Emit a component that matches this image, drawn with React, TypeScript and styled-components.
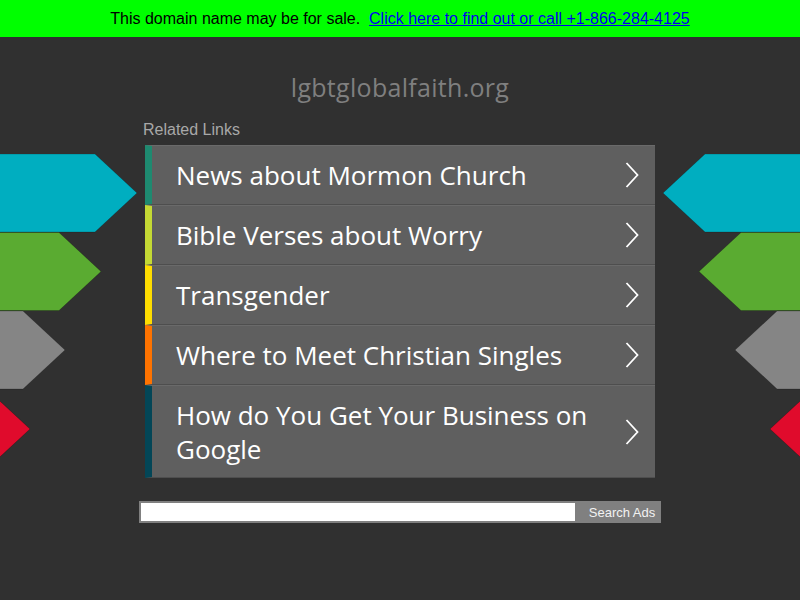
import React from "react";
import styled, { createGlobalStyle } from "styled-components";

const Global = createGlobalStyle`
  html, body { margin: 0; padding: 0; background: #303030; }
  body { font-family: "Liberation Sans", Arial, sans-serif; }
`;

const Page = styled.div`
  position: relative;
  width: 800px;
  height: 600px;
  overflow: hidden;
  background: #303030;
`;

const Banner = styled.div`
  height: 37px;
  background: #00ff00;
  display: flex;
  align-items: center;
  justify-content: center;
  font: 16px "Liberation Sans", Arial, sans-serif;
  color: #000;
  white-space: pre;
`;

const BannerLink = styled.a`
  color: #0000ee;
  text-decoration: underline;
`;

const Title = styled.h1`
  margin: 33px 0 0;
  text-align: center;
  font: 400 25px/34px "Open Sans", sans-serif;
  color: #7f7f7f;
  letter-spacing: 0.3px;
`;

const Content = styled.div`
  position: relative;
  z-index: 1;
  width: 510px;
  margin: 0 auto;
`;

const RelatedLabel = styled.div`
  margin: 16px 0 0 -2px;
  font: 16px/20px "Liberation Sans", Arial, sans-serif;
  color: #a8a8a8;
`;

const List = styled.div`
  margin-top: 5px;
  display: flex;
  flex-direction: column;
`;

const Row = styled.a<{ $accent: string; $tall?: boolean }>`
  display: flex;
  align-items: center;
  box-sizing: border-box;
  height: ${(p) => (p.$tall ? "93px" : "60px")};
  background: #5f5f5f;
  border-left: 7px solid ${(p) => p.$accent};
  border-top: 1px solid #6a6a6a;
  border-bottom: 1px solid #4e4e4e;
  padding: 0 16px 0 24px;
  text-decoration: none;
  color: #ffffff;
`;

const RowText = styled.span`
  flex: 1;
  font: 400 26px/34px "Open Sans", sans-serif;
  color: #fff;
`;

const Chevron = styled.svg`
  flex: none;
  width: 14px;
  height: 26px;
`;

const SearchBar = styled.form`
  display: flex;
  width: 522px;
  height: 22px;
  margin: 23px 0 0 -6px;
  box-sizing: border-box;
  background: #808080;
  padding: 2px 0 2px 2px;
`;

const SearchInput = styled.input`
  flex: 1;
  border: none;
  outline: none;
  background: #fff;
  padding: 0;
  margin: 0;
  height: 18px;
`;

const SearchButton = styled.button`
  flex: none;
  width: 86px;
  border: none;
  background: #808080;
  color: #f2f2f2;
  font: 13px "Liberation Sans", Arial, sans-serif;
  padding: 0 0 0 8px;
  margin: -2px 0;
  text-align: center;
`;

const Decor = styled.svg<{ $side: "left" | "right" }>`
  position: absolute;
  top: 154px;
  ${(p) => (p.$side === "left" ? "left: 0;" : "right: 0;")}
  width: 140px;
  height: 320px;
  ${(p) => (p.$side === "right" ? "transform: scaleX(-1);" : "")}
`;

const arrows = [
  { color: "#00aec0", body: 95, top: 0 },
  { color: "#5aab31", body: 59, top: 78.5 },
  { color: "#858585", body: 23, top: 157 },
  { color: "#e00b2c", body: -12, top: 236 },
];

function Arrows({ side }: { side: "left" | "right" }) {
  return (
    <Decor $side={side} viewBox="0 0 140 320">
      {arrows.map((a, i) => (
        <polygon
          key={i}
          points={`-20,${a.top} ${a.body},${a.top} ${a.body + 42},${a.top + 39} ${a.body},${a.top + 78} -20,${a.top + 78}`}
          fill={a.color}
          stroke="rgba(0,0,0,0.25)"
          strokeWidth="0.8"
        />
      ))}
    </Decor>
  );
}

const links = [
  { text: "News about Mormon Church", color: "#1e8a70" },
  { text: "Bible Verses about Worry", color: "#c4d934" },
  { text: "Transgender", color: "#ffdd00" },
  { text: "Where to Meet Christian Singles", color: "#ff7300" },
  { text: "How do You Get Your Business on Google", color: "#034657", tall: true },
];

export default function App() {
  return (
    <Page>
      <Global />
      <Banner>
        {"This domain name may be for sale.  "}
        <BannerLink href="#">Click here to find out or call +1-866-284-4125</BannerLink>
      </Banner>
      <Arrows side="left" />
      <Arrows side="right" />
      <Title>lgbtglobalfaith.org</Title>
      <Content>
        <RelatedLabel>Related Links</RelatedLabel>
        <List>
          {links.map((l) => (
            <Row key={l.text} href="#" $accent={l.color} $tall={l.tall}>
              <RowText>{l.text}</RowText>
              <Chevron viewBox="0 0 14 26">
                <polyline points="1.5,1 12.5,13 1.5,25" fill="none" stroke="#fff" strokeWidth="1.8" />
              </Chevron>
            </Row>
          ))}
        </List>
        <SearchBar onSubmit={(e) => e.preventDefault()}>
          <SearchInput type="text" />
          <SearchButton type="submit">Search Ads</SearchButton>
        </SearchBar>
      </Content>
    </Page>
  );
}
